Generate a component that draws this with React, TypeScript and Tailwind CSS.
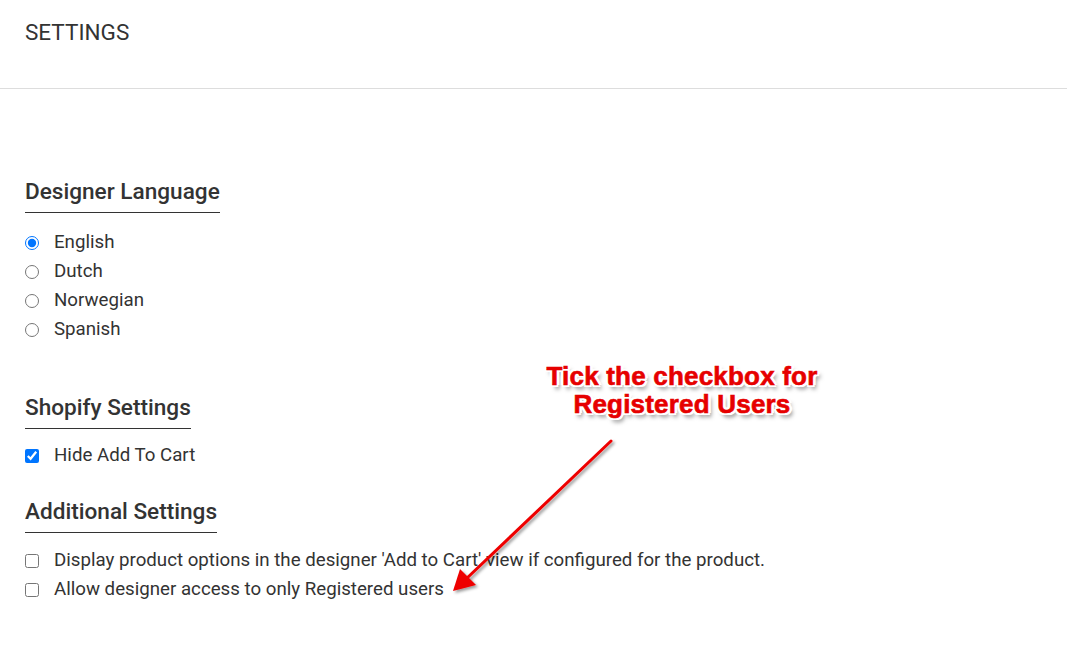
import React from 'react';

const languages = ['English', 'Dutch', 'Norwegian', 'Spanish'];

function SectionTitle({ children, className = '' }: { children: React.ReactNode; className?: string }) {
  return (
    <div className={className}>
      <h2 className="inline-block border-b border-[#333] pb-[7px] text-[22.6px] font-medium leading-[26px] text-[#333]">
        {children}
      </h2>
    </div>
  );
}

function CheckRow({ label, checked = false }: { label: string; checked?: boolean }) {
  return (
    <label className="flex h-[29px] items-center">
      <input type="checkbox" defaultChecked={checked} className="m-0 ml-[25px] h-[14px] w-[14px] accent-[#0075ff]" />
      <span className="ml-[15px] text-[18.7px] text-[#333]">{label}</span>
    </label>
  );
}

export default function App() {
  return (
    <div className="relative min-h-[658px] w-full bg-white font-['Roboto',sans-serif]">
      <header className="h-[89px] border-b border-[#ddd] px-[25px] pt-[19px]">
        <h1 className="text-[22.5px] leading-[26px] text-[#333]">SETTINGS</h1>
      </header>

      <main className="px-[25px]">
        <SectionTitle className="mt-[90px]">Designer Language</SectionTitle>
        <div className="mt-[15px] -ml-[25px]">
          {languages.map((lang, i) => (
            <label key={lang} className="flex h-[29px] items-center">
              <input
                type="radio"
                name="lang"
                defaultChecked={i === 0}
                className="m-0 ml-[25px] h-[14px] w-[14px] accent-[#0075ff]"
              />
              <span className="ml-[15px] text-[18.7px] text-[#333]">{lang}</span>
            </label>
          ))}
        </div>

        <SectionTitle className="mt-[51px]">Shopify Settings</SectionTitle>
        <div className="mt-[12px] -ml-[25px]">
          <CheckRow label="Hide Add To Cart" checked />
        </div>

        <SectionTitle className="mt-[29px]">Additional Settings</SectionTitle>
        <div className="mt-[13px] -ml-[25px]">
          <CheckRow label="Display product options in the designer 'Add to Cart' view if configured for the product." />
          <CheckRow label="Allow designer access to only Registered users" />
        </div>
      </main>

      {/* annotation overlay */}
      <div className="absolute left-[522px] top-[362px] w-[320px] text-center font-['Liberation_Sans',Arial,sans-serif] text-[26px] font-bold leading-[28px] tracking-[0.2px] text-[#e60000] [text-shadow:-2px_0_#fff,2px_0_#fff,0_-2px_#fff,0_2px_#fff,-2px_-2px_#fff,2px_2px_#fff,-2px_2px_#fff,2px_-2px_#fff,-3px_0_#fff,3px_0_#fff,3px_4px_4px_rgba(0,0,0,0.5)] [-webkit-text-stroke:0.6px_#e60000]">
        Tick the checkbox for
        <br />
        Registered Users
      </div>
      <svg className="pointer-events-none absolute left-0 top-0" width="1067" height="658">
        <defs>
          <filter id="sh" x="-20%" y="-20%" width="140%" height="140%">
            <feDropShadow dx="2" dy="2" stdDeviation="1.5" floodColor="#000" floodOpacity="0.4" />
          </filter>
        </defs>
        <g filter="url(#sh)">
          <line x1="611" y1="441" x2="466" y2="579" stroke="#ee0000" strokeWidth="3" strokeLinecap="round" />
          <polygon points="453,591 460,569 476,585" fill="#ee0000" />
        </g>
      </svg>
    </div>
  );
}
